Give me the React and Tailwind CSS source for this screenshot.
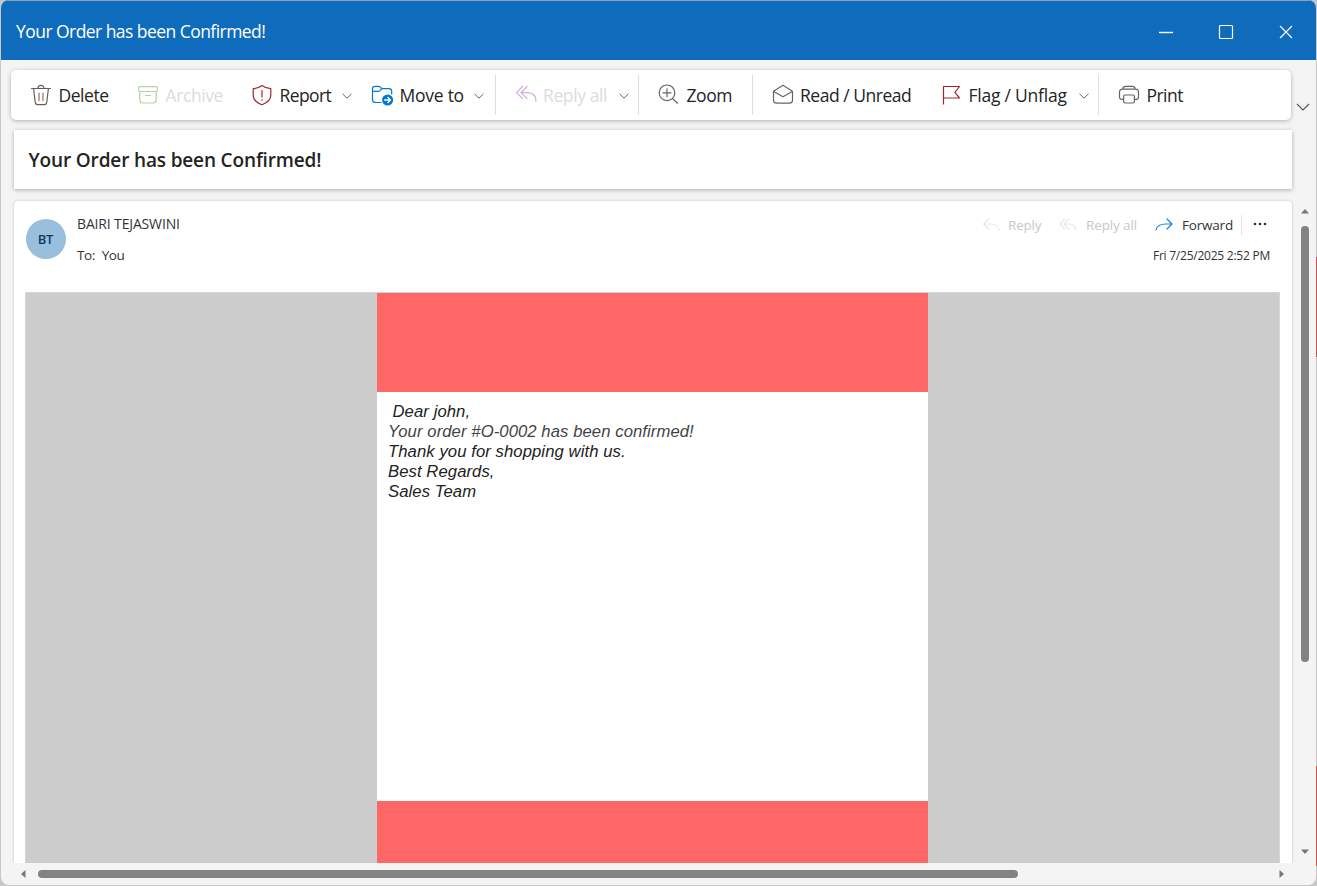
import React from 'react';

function Icon({ children, color, className = 'w-[22px] h-[22px] mt-px', box = '0 0 22 22' }) {
  return (
    <svg viewBox={box} fill="none" stroke={color} strokeWidth="1.2" strokeLinecap="round" strokeLinejoin="round" className={`shrink-0 ${className}`}>
      {children}
    </svg>
  );
}

function Chevron({ className = 'ml-[10px]' }) {
  return (
    <svg viewBox="0 0 12 8" fill="none" stroke="#666" strokeWidth="1" className={`mt-[2px] h-2 w-3 shrink-0 ${className}`}>
      <path d="M1.500 1.800 6 6.200l4.500-4.400" />
    </svg>
  );
}

function Item({ className, label, labelClass, icon, menu }) {
  return (
    <button className={`flex h-10 shrink-0 items-center ${className}`}>
      {icon}
      <span className={`ml-[6.500px] mt-px shrink-0 whitespace-nowrap text-left text-[17.500px] leading-6 ${labelClass}`}>{label}</span>
      {menu && <Chevron />}
    </button>
  );
}

const trash = (
  <Icon color="#5f5f5f">
    <path d="M1.500 4.500h19M8 4.300a3 3 0 0 1 6 0M3.600 4.700l1.700 14q.3 2 2.200 2h7q1.900 0 2.200-2l1.700-14" />
    <path stroke="#9a6c55" d="M9 9v7.500M13 9v7.500" />
  </Icon>
);
const archive = (
  <Icon color="#b5d3a0">
    <rect x="1.700" y="2.600" width="18.600" height="4.900" rx="1" />
    <path d="M2.800 7.500V16q0 3 3 3h10.400q3 0 3-3V7.500M8.500 11.500h5" />
  </Icon>
);
const shield = (
  <Icon color="#a4262c">
    <path d="M11 1.500c2.500 2 5 3 8.800 3.200V11c0 4.800-3.600 7.900-8.800 9.700C5.800 18.900 2.200 15.800 2.200 11V4.700C6 4.500 8.500 3.500 11 1.500Z" />
    <path d="M11 6.500v6.500M11 15.700v.5" />
  </Icon>
);
const folder = (
  <Icon color="#0078d4">
    <path d="M10 18.500H4.500q-3 0-3-3V5q0-2.700 2.700-2.700h3.300q1.100 0 1.900.8l1.500 1.500h7q2.800 0 2.800 2.800v2.500M1.700 7.400h5.400q1.100 0 1.900-.8l1.700-1.900" />
    <circle cx="16.600" cy="16" r="5.500" fill="#0078d4" stroke="none" />
    <path stroke="#fff" strokeWidth="1.400" d="M13.700 16h5.500M17 13.600l2.400 2.400-2.400 2.400" />
  </Icon>
);
const replyAll = (
  <Icon color="#d5aadd">
    <path d="M7.500 2.500 1.500 8.600l6 6M12 2.500 6 8.600l6 6M6 8.600h7q8 .3 8 8.600" />
  </Icon>
);
const zoom = (
  <Icon color="#666">
    <circle cx="9" cy="8.800" r="7.800" />
    <path d="m14.500 14.500 5 4.700M5 8.800h8M9 4.800v8" />
  </Icon>
);
const envelope = (
  <Icon color="#666">
    <path d="M1.500 8q0-.8.800-1.300L11 1.200l8.700 5.500q.8.500.8 1.300v8.200q0 3-3 3h-13q-3 0-3-3Z" />
    <path d="m1.800 7.500 9.200 5.200 9.200-5.200" />
  </Icon>
);
const flag = (
  <Icon color="#a4262c">
    <path strokeLinecap="butt" d="M3.500 20.600V2.500h16l-4.600 5.800 4.600 5.700h-16" />
  </Icon>
);
const printer = (
  <Icon color="#666">
    <path d="M5.600 15.400H4q-2.500 0-2.500-2.500V8.100q0-3 3-3h13q3 0 3 3v4.800q0 2.500-2.500 2.500h-1.600M4.700 5q.4-2.600 3-2.600h6.600q2.600 0 3 2.600" />
    <rect x="5.600" y="11" width="10.800" height="8" rx="1.400" />
  </Icon>
);

function TitleBar() {
  return (
    <header className="flex h-[60px] shrink-0 items-center border-t border-[#8fa3b8] bg-[#0f6cbd] pl-[15px] pr-[22px] pt-[2px] text-white">
      <h1 className="grow whitespace-nowrap text-[17.500px] tracking-[-0.550px]">Your Order has been Confirmed!</h1>
      <svg className="mr-[44px] h-4 w-4" viewBox="0 0 16 16" stroke="currentColor" strokeWidth="1.400"><path d="M1 8.500h14" /></svg>
      <svg className="mr-[44px] h-4 w-4" viewBox="0 0 16 16" fill="none" stroke="currentColor" strokeWidth="1.200"><rect x="1.500" y="1.500" width="13" height="13" rx="1" /></svg>
      <svg className="h-4 w-4" viewBox="0 0 16 16" stroke="currentColor" strokeWidth="1.200"><path d="m2 2 12 12M14 2 2 14" /></svg>
    </header>
  );
}

function Toolbar() {
  return (
    <div className="mt-[10px] flex h-[50px]">
      <nav className="ml-[10px] flex w-[1280px] shrink-0 items-center rounded-[5px] bg-white pl-[19px] text-[#242424] shadow-[0_1px_4px_rgba(0,0,0,0.28)]">
        <Item className="w-[107px]" icon={trash} label="Delete" labelClass="w-[51px] tracking-[-0.450px]" />
        <Item className="w-[114px] text-[#dcdcdc]" icon={archive} label="Archive" labelClass="w-[58px] tracking-[-0.400px]" />
        <Item className="w-[120px]" icon={shield} label="Report" labelClass="w-[51.500px] tracking-[-0.600px]" menu />
        <Item className="w-[124px]" icon={folder} label="Move to" labelClass="w-[63.500px] tracking-[-0.250px]" menu />
        <Item className="w-[143px] border-l border-[#dedede] pl-[18.500px] text-[#dcdcdc]" icon={replyAll} label="Reply all" labelClass="w-[65px] tracking-[-0.400px]" menu />
        <Item className="w-[114px] border-l border-[#dedede] pl-[19px]" icon={zoom} label="Zoom" labelClass="tracking-[-0.450px]" />
        <Item className="w-[188px] border-l border-[#dedede] pl-[18.500px]" icon={envelope} label="Read / Unread" labelClass="tracking-[-0.470px]" />
        <Item className="w-[158px]" icon={flag} label="Flag / Unflag" labelClass="w-[99.500px] tracking-[-0.230px]" menu />
        <Item className="border-l border-[#dedede] pl-[19px]" icon={printer} label="Print" labelClass="tracking-[-0.550px]" />
      </nav>
      <svg viewBox="0 0 14 9" fill="none" stroke="#555" strokeWidth="1.100" className="ml-[4.500px] mt-[33px] h-[9px] w-[14px]"><path d="m1 1 6 6 6-6" /></svg>
    </div>
  );
}

function MessageHeader() {
  return (
    <div className="flex h-[91px] items-start pl-[11.500px] pr-[22px] text-[14px] leading-5 text-[#333]">
      <div className="mt-[18.500px] flex h-10 w-10 items-center justify-center rounded-full bg-[#9abfdc] text-[13px] font-semibold tracking-[-0.300px] text-[#0c3b5e]">BT</div>
      <div className="ml-[11.500px] grow">
        <div className="mt-[13px] whitespace-nowrap text-[14px] tracking-[-0.150px]">BAIRI TEJASWINI</div>
        <div className="mt-[11px] text-[13.500px] tracking-[-0.450px]">To:<span className="ml-[7px]">You</span></div>
      </div>
      <div className="flex flex-col items-end">
        <div className="mt-[14px] flex h-5 items-center whitespace-nowrap text-[13.500px] tracking-[-0.200px] text-[#c8c8c8]">
          <Icon color="#e8e8e8" box="0 0 18 16" className="h-4 w-[18px]"><path d="M6.500 2 1.500 7l5 5M1.500 7h6q9 0 9.500 6" /></Icon>
          <span className="ml-[8px] w-[36px]">Reply</span>
          <Icon color="#e8e8e8" box="0 0 18 16" className="ml-[15px] h-4 w-[18px]"><path d="M5.500 2 1 7l4.500 5M9.500 2 5 7l4.500 5M5 7h4q7.500 0 8 6" /></Icon>
          <span className="ml-[9px] w-[52px] tracking-[-0.130px]">Reply all</span>
          <Icon color="#1683d8" box="0 0 18 16" className="ml-[17px] h-4 w-[18px]"><path d="m12 2 5 5-5 5M17 7h-6q-9 0-10 6" /></Icon>
          <span className="ml-[9px] w-[51px] text-[#333]">Forward</span>
          <span className="ml-2 h-5 w-px bg-[#e3e3e3]" />
          <svg className="ml-[11px] mr-[3px] h-4 w-[14px]" viewBox="0 0 14 16" fill="#333"><circle cx="2" cy="7" r="1.300" /><circle cx="7" cy="7" r="1.300" /><circle cx="12" cy="7" r="1.300" /></svg>
        </div>
        <div className="mt-[11px] whitespace-nowrap text-[12px] tracking-[-0.240px]">Fri 7/25/2025 2:52 PM</div>
      </div>
    </div>
  );
}

function MailBody() {
  return (
    <div className="ml-[11px] flex h-[571px] w-[1255px] justify-center border-x border-t border-[#d5d5d5] bg-[#cccccc]">
      <article className="flex w-[551px] flex-col bg-white">
        <div className="h-[99px] bg-[#ff6666]" />
        <div className="h-[409.500px] pl-[11px] pt-[10px] font-['Liberation_Sans',Arial,sans-serif] text-[16.670px] italic leading-5 tracking-[0.080px] text-[#222]">
          <p className="pl-[4.500px]">Dear john,</p>
          <p className="text-[#444]">Your order #O-0002 has been confirmed!</p>
          <p>Thank you for shopping with us.</p>
          <p>Best Regards,</p>
          <p>Sales Team</p>
        </div>
        <div className="grow bg-[#ff6666]" />
      </article>
    </div>
  );
}

export default function App() {
  return (
    <div className="flex h-[886px] w-[1317px] bg-[#c8c8c8] font-['Open_Sans','Noto_Sans',sans-serif]">
      <main className="ml-px mb-px flex w-[1315px] flex-col overflow-hidden rounded-lg bg-[#f4f4f4]">
        <TitleBar />
        <Toolbar />
        <section className="ml-[13px] mt-[10px] flex h-[59px] w-[1278px] shrink-0 items-center bg-white pl-[14.500px] pt-[2px] shadow-[0_1px_4px_rgba(0,0,0,0.3)]">
          <h2 className="whitespace-nowrap text-[19px] font-semibold tracking-[-0.150px] text-[#242424]">Your Order has been Confirmed!</h2>
        </section>
        <div className="flex h-[675px] overflow-hidden pt-3">
          <section className="ml-[13px] h-[680px] w-[1278px] shrink-0 rounded-t-[4px] bg-white shadow-[0_0_3px_rgba(0,0,0,0.22)]">
            <MessageHeader />
            <MailBody />
          </section>
          <div className="ml-[9px] mt-2 flex w-2 flex-col items-center">
            <svg viewBox="0 0 8 5" className="h-[5px] w-2 fill-[#777]"><path d="M0 4.500 4 0l4 4.500z" /></svg>
            <div className="mt-[12px] h-[436px] w-2 rounded-full bg-[#838383]" />
            <svg viewBox="0 0 8 5" className="mt-[187px] h-[5px] w-2 fill-[#777]"><path d="M0 .5 4 5l4-4.500z" /></svg>
          </div>
        </div>
        <div className="flex h-[22px] shrink-0 items-center pl-[20px]">
          <svg viewBox="0 0 5 8" className="h-2 w-[5px] fill-[#777]"><path d="M4.500 0 0 4l4.500 4z" /></svg>
          <div className="ml-[12px] h-2 w-[980px] rounded-full bg-[#838383]" />
          <svg viewBox="0 0 5 8" className="ml-[261px] h-2 w-[5px] fill-[#777]"><path d="M.5 0 5 4 .5 8z" /></svg>
        </div>
      </main>
      <div className="mt-[257px] flex w-px flex-col">
        <div className="h-[100px] bg-[#c45454]" />
        <div className="mt-[409px] h-[100px] bg-[#c45454]" />
      </div>
    </div>
  );
}
